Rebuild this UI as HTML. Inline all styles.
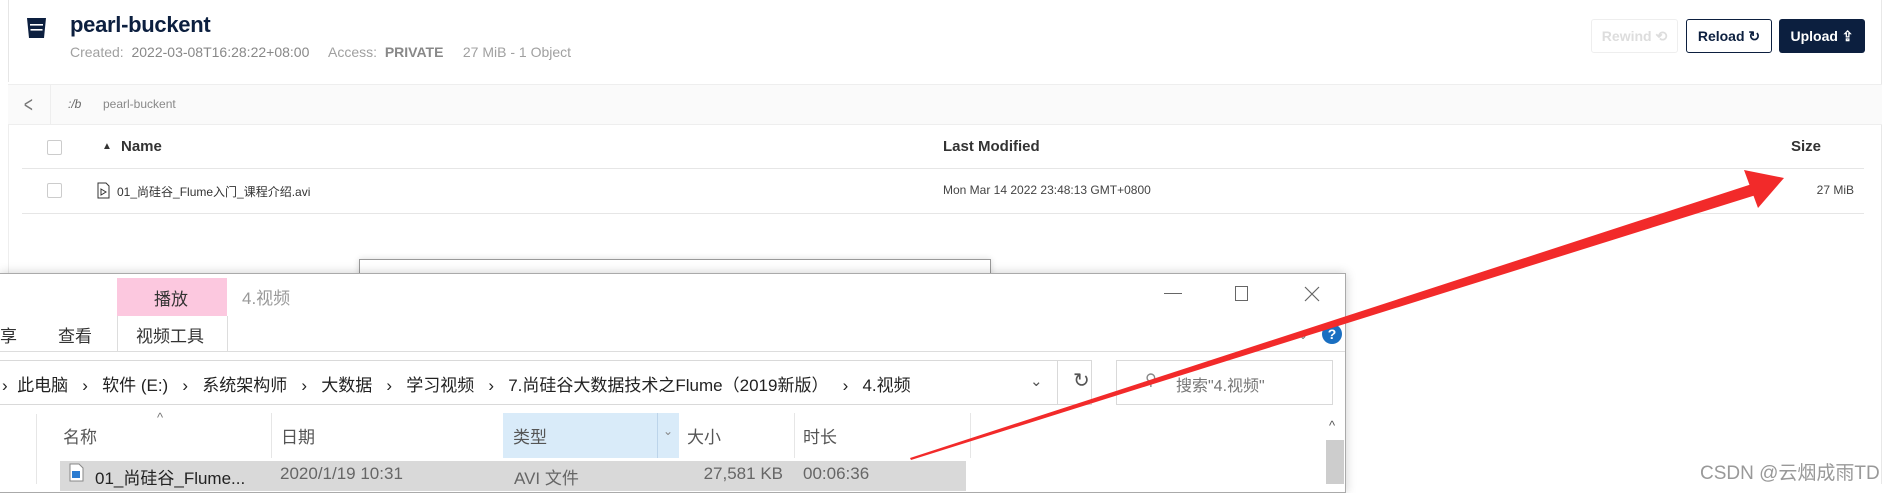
<!DOCTYPE html>
<html><head><meta charset="utf-8"><style>
*{margin:0;padding:0;box-sizing:border-box}
body{width:1900px;height:484px;overflow:hidden;background:#fff;position:relative;font-family:"Liberation Sans","Noto Sans CJK SC",sans-serif;color:#222}
.a{position:absolute;white-space:nowrap}
.cn{font-family:"Liberation Sans","Noto Sans CJK SC",sans-serif}
</style></head><body>
<div class="a" style="left:8px;top:0;width:1px;height:82px;background:#e6e6e6"></div>
<div class="a" style="left:1881px;top:0;width:1px;height:484px;background:#e8e8e8"></div>
<svg class="a" style="left:26px;top:17px" width="21" height="22" viewBox="0 0 21 22"><path d="M1 1h19l-2 20H3z" fill="#0c1f3f"/><rect x="4" y="7" width="13" height="1.6" fill="#fff"/><rect x="4.5" y="12" width="12" height="1.6" fill="#fff"/></svg>
<div class="a" style="left:70px;top:12px;font-size:22px;font-weight:bold;color:#0c1f3f;letter-spacing:-0.3px">pearl-buckent</div>
<div class="a" style="left:70px;top:44px;font-size:14px;color:#a0a0a0">Created:&nbsp; <span style="color:#888">2022-03-08T16:28:22+08:00</span>&nbsp;&nbsp;&nbsp;&nbsp; Access:&nbsp; <b style="color:#888">PRIVATE</b>&nbsp;&nbsp;&nbsp;&nbsp; 27 MiB - 1 Object</div>
<div class="a" style="left:1591px;top:19px;width:87px;height:34px;border:1px solid #eee;border-radius:3px;color:#ddd;font-size:14px;font-weight:bold;text-align:center;line-height:32px">Rewind ⟲</div>
<div class="a" style="left:1686px;top:19px;width:86px;height:34px;border:1px solid #0c1f3f;border-radius:3px;color:#0c1f3f;font-size:14px;font-weight:bold;text-align:center;line-height:32px">Reload ↻</div>
<div class="a" style="left:1779px;top:19px;width:86px;height:34px;background:#0c1f3f;border-radius:3px;color:#fff;font-size:14px;font-weight:bold;text-align:center;line-height:34px">Upload ⇪</div>
<div class="a" style="left:8px;top:84px;width:1874px;height:41px;background:#fafafa;border-top:1px solid #eee;border-bottom:1px solid #eee"></div>
<div class="a" style="left:50px;top:85px;width:1px;height:39px;background:#eee"></div>
<div class="a" style="left:22px;top:92px;font-size:22px;color:#777;transform:scaleX(.7)">&lt;</div>
<div class="a" style="left:68px;top:97px;font-size:12px;color:#666;font-style:italic">:/b</div>
<div class="a" style="left:103px;top:97px;font-size:12px;color:#888">pearl-buckent</div>
<div class="a" style="left:8px;top:125px;width:1px;height:160px;background:#eee"></div>
<div class="a" style="left:47px;top:140px;width:15px;height:15px;border:1px solid #ccc;border-radius:2px"></div>
<div class="a" style="left:102px;top:141px;font-size:10px;color:#333">▲</div>
<div class="a" style="left:121px;top:138px;font-size:15px;font-weight:bold;color:#333">Name</div>
<div class="a" style="left:943px;top:138px;font-size:15px;font-weight:bold;color:#333">Last Modified</div>
<div class="a" style="left:1791px;top:138px;font-size:15px;font-weight:bold;color:#333">Size</div>
<div class="a" style="left:22px;top:168px;width:1842px;height:1px;background:#e6e6e6"></div>
<div class="a" style="left:47px;top:183px;width:15px;height:15px;border:1px solid #ccc;border-radius:2px"></div>
<svg class="a" style="left:97px;top:182px" width="13" height="17" viewBox="0 0 13 17"><path d="M1 1h8l3 3v12H1z" fill="none" stroke="#333"/><path d="M4 7l5 3-5 3z" fill="none" stroke="#333"/></svg>
<div class="a" style="left:117px;top:183px;font-size:12px;color:#333">01_尚硅谷_Flume入门_课程介绍.avi</div>
<div class="a" style="left:943px;top:183px;font-size:12px;color:#444">Mon Mar 14 2022 23:48:13 GMT+0800</div>
<div class="a" style="left:1800px;top:183px;width:54px;text-align:right;font-size:12px;color:#444">27 MiB</div>
<div class="a" style="left:22px;top:213px;width:1842px;height:1px;background:#e6e6e6"></div>
<div class="a" style="left:359px;top:259px;width:632px;height:40px;border:1px solid #999;border-bottom:none;background:#fff;box-shadow:0 0 6px rgba(0,0,0,.15)"></div>
<div class="a" style="left:0;top:273px;width:1346px;height:220px;background:#fff;border:1px solid #aaa;border-left:none;box-shadow:0 0 10px rgba(0,0,0,.2)"></div>
<div class="a" style="left:117px;top:278px;width:110px;height:38px;background:#fcc8df"></div>
<div class="a cn" style="left:154px;top:285px;font-size:17px;color:#333">播放</div>
<div class="a cn" style="left:242px;top:284px;font-size:17px;color:#999">4.视频</div>
<div class="a" style="left:117px;top:316px;width:1px;height:36px;background:#ddd"></div>
<div class="a" style="left:227px;top:316px;width:1px;height:36px;background:#ddd"></div>
<div class="a" style="left:1164px;top:293px;width:18px;height:1px;background:#666"></div>
<div class="a" style="left:1235px;top:286px;width:13px;height:15px;border:1px solid #666"></div>
<svg class="a" style="left:1304px;top:286px" width="16" height="16" viewBox="0 0 16 16"><path d="M1 1L15 15M15 1L1 15" stroke="#666" stroke-width="1.2"/></svg>
<div class="a cn" style="left:0;top:322px;font-size:17px;color:#333">享</div>
<div class="a cn" style="left:58px;top:322px;font-size:17px;color:#333">查看</div>
<div class="a cn" style="left:136px;top:322px;font-size:17px;color:#333">视频工具</div>
<div class="a" style="left:1298px;top:328px;font-size:12px;color:#777">⌄</div>
<div class="a" style="left:1322px;top:324px;width:20px;height:20px;border-radius:50%;background:#1a6fc1;color:#fff;font-size:14px;font-weight:bold;text-align:center;line-height:20px">?</div>
<div class="a" style="left:0;top:351px;width:1345px;height:1px;background:#ddd"></div>
<div class="a" style="left:0;top:360px;width:1092px;height:45px;border:1px solid #d9d9d9;border-left:none"></div>
<div class="a" style="left:1057px;top:360px;width:1px;height:45px;background:#d9d9d9"></div>
<div class="a cn" style="left:2px;top:371px;font-size:17px;color:#222">›&nbsp; 此电脑 &nbsp;&nbsp;›&nbsp;&nbsp; 软件 (E:) &nbsp;&nbsp;›&nbsp;&nbsp; 系统架构师 &nbsp;&nbsp;›&nbsp;&nbsp; 大数据 &nbsp;&nbsp;›&nbsp;&nbsp; 学习视频 &nbsp;&nbsp;›&nbsp;&nbsp; 7.尚硅谷大数据技术之Flume（2019新版） &nbsp;&nbsp;›&nbsp;&nbsp; 4.视频</div>
<div class="a" style="left:1030px;top:372px;font-size:15px;color:#555">⌄</div>
<div class="a" style="left:1073px;top:368px;font-size:20px;color:#555">↻</div>
<div class="a" style="left:1116px;top:360px;width:217px;height:45px;border:1px solid #d9d9d9"></div>
<div class="a" style="left:1145px;top:370px;font-size:16px;color:#888">⚲</div>
<div class="a cn" style="left:1176px;top:372px;font-size:16px;color:#777">搜索"4.视频"</div>
<div class="a" style="left:36px;top:414px;width:1px;height:70px;background:#e6e6e6"></div>
<div class="a" style="left:157px;top:410px;font-size:13px;color:#777">^</div>
<div class="a" style="left:503px;top:413px;width:176px;height:45px;background:#d9ebf9"></div>
<div class="a" style="left:657px;top:413px;width:1px;height:45px;background:#bcd4ea"></div>
<div class="a" style="left:663px;top:424px;font-size:12px;color:#888">⌄</div>
<div class="a" style="left:271px;top:413px;width:1px;height:45px;background:#e6e6e6"></div>
<div class="a" style="left:794px;top:413px;width:1px;height:45px;background:#e6e6e6"></div>
<div class="a" style="left:970px;top:413px;width:1px;height:45px;background:#e6e6e6"></div>
<div class="a cn" style="left:63px;top:423px;font-size:17px;color:#555">名称</div>
<div class="a cn" style="left:281px;top:423px;font-size:17px;color:#555">日期</div>
<div class="a cn" style="left:513px;top:423px;font-size:17px;color:#555">类型</div>
<div class="a cn" style="left:687px;top:423px;font-size:17px;color:#555">大小</div>
<div class="a cn" style="left:803px;top:423px;font-size:17px;color:#555">时长</div>
<div class="a" style="left:60px;top:461px;width:906px;height:30px;background:#d9d9d9"></div>
<svg class="a" style="left:69px;top:463px" width="15" height="19" viewBox="0 0 15 19"><path d="M1 1h9l4 4v13H1z" fill="#fff" stroke="#888"/><rect x="3" y="8" width="8" height="7" fill="#2b7bd0"/></svg>
<div class="a cn" style="left:95px;top:464px;font-size:17px;color:#222">01_尚硅谷_Flume...</div>
<div class="a cn" style="left:280px;top:464px;font-size:17px;color:#666">2020/1/19 10:31</div>
<div class="a cn" style="left:514px;top:464px;font-size:17px;color:#666">AVI 文件</div>
<div class="a cn" style="left:690px;top:464px;width:93px;text-align:right;font-size:17px;color:#666">27,581 KB</div>
<div class="a cn" style="left:803px;top:464px;font-size:17px;color:#666">00:06:36</div>
<div class="a" style="left:1329px;top:418px;font-size:13px;color:#555">^</div>
<div class="a" style="left:1326px;top:440px;width:18px;height:44px;background:#cdcdcd"></div>
<svg class="a" style="left:0;top:0" width="1900" height="484" viewBox="0 0 1900 484"><path d="M910 458 L1752 184 L1756 195 L911 460 Z" fill="#f22a2a"/><path d="M1784 178 L1744 170 L1758 208 Z" fill="#f22a2a"/></svg>
<div class="a cn" style="left:1700px;top:458px;font-size:19px;color:#999">CSDN @云烟成雨TD</div>
</body></html>
